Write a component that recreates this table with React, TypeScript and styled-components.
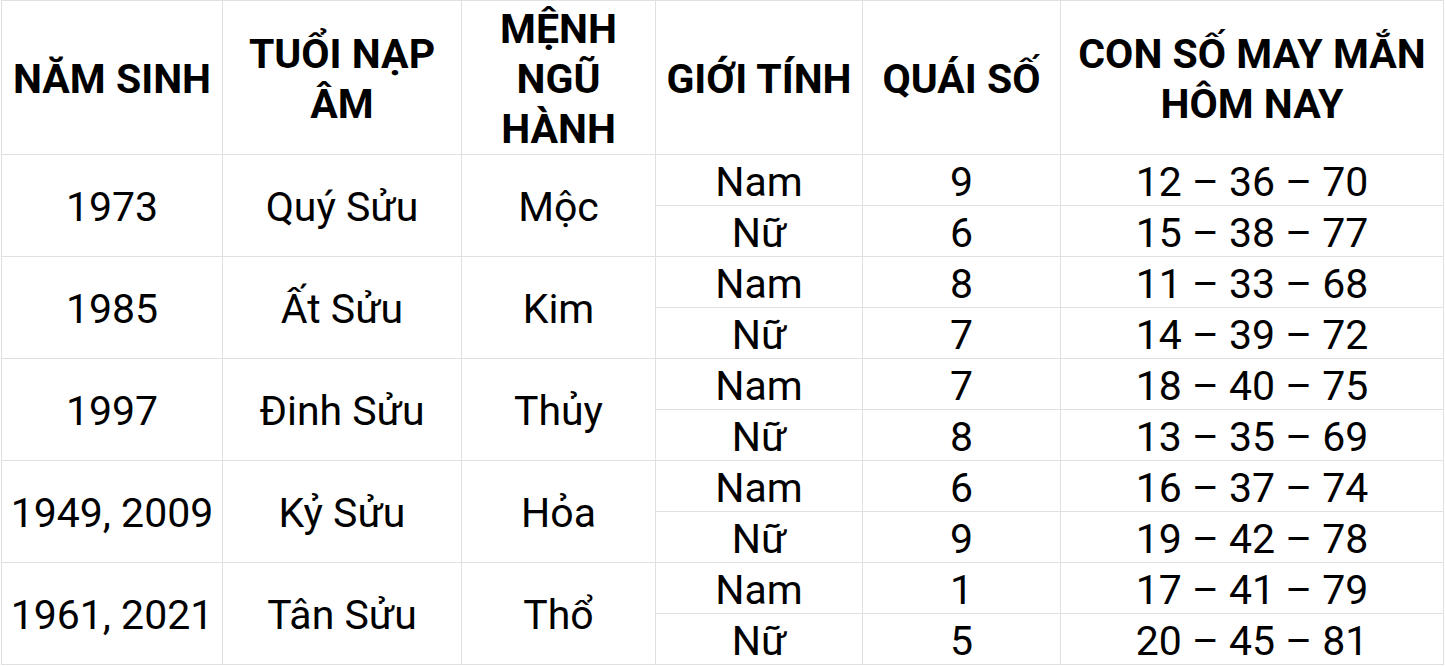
import styled, { createGlobalStyle } from 'styled-components'

const GlobalStyle = createGlobalStyle`
  html, body {
    margin: 0;
    padding: 0;
    background: #ffffff;
  }
  body {
    font-family: Roboto, "Noto Sans", "Liberation Sans", sans-serif;
    color: #000000;
  }
`

const Page = styled.div`
  padding-left: 1px;
`

const Table = styled.table`
  border-collapse: collapse;
  table-layout: fixed;
  width: 1442px;
  border-left: 1px solid #a8a8a8;
`

const Col = styled.col<{ $w: number }>`
  width: ${(p) => p.$w}px;
`

const HeadCell = styled.th`
  height: 151px;
  padding: 2px 6px 0;
  border: 1px solid #e0e0e0;
  font-size: 41px;
  line-height: 50px;
  font-weight: 700;
  text-align: center;
  vertical-align: middle;
`

const Cell = styled.td`
  height: 47px;
  padding: 3px 4px 0;
  border: 1px solid #e0e0e0;
  font-size: 41px;
  line-height: 46px;
  font-weight: 400;
  text-align: center;
  vertical-align: middle;
  white-space: nowrap;
`

type Row = {
  year: string
  tuoi: string
  menh: string
  nam: [string, string]
  nu: [string, string]
}

const rows: Row[] = [
  { year: '1973', tuoi: 'Quý Sửu', menh: 'Mộc', nam: ['9', '12 – 36 – 70'], nu: ['6', '15 – 38 – 77'] },
  { year: '1985', tuoi: 'Ất Sửu', menh: 'Kim', nam: ['8', '11 – 33 – 68'], nu: ['7', '14 – 39 – 72'] },
  { year: '1997', tuoi: 'Đinh Sửu', menh: 'Thủy', nam: ['7', '18 – 40 – 75'], nu: ['8', '13 – 35 – 69'] },
  { year: '1949, 2009', tuoi: 'Kỷ Sửu', menh: 'Hỏa', nam: ['6', '16 – 37 – 74'], nu: ['9', '19 – 42 – 78'] },
  { year: '1961, 2021', tuoi: 'Tân Sửu', menh: 'Thổ', nam: ['1', '17 – 41 – 79'], nu: ['5', '20 – 45 – 81'] },
]

const widths = [221, 239, 194, 207, 198, 383]

export default function App() {
  return (
    <Page>
      <GlobalStyle />
      <Table>
        <colgroup>
          {widths.map((w, i) => (
            <Col key={i} $w={w} />
          ))}
        </colgroup>
        <thead>
          <tr>
            <HeadCell>NĂM SINH</HeadCell>
            <HeadCell>TUỔI NẠP ÂM</HeadCell>
            <HeadCell>MỆNH NGŨ HÀNH</HeadCell>
            <HeadCell>GIỚI TÍNH</HeadCell>
            <HeadCell>QUÁI SỐ</HeadCell>
            <HeadCell>CON SỐ MAY MẮN HÔM NAY</HeadCell>
          </tr>
        </thead>
        <tbody>
          {rows.map((r) => [
            <tr key={r.year + '-nam'}>
              <Cell rowSpan={2}>{r.year}</Cell>
              <Cell rowSpan={2}>{r.tuoi}</Cell>
              <Cell rowSpan={2}>{r.menh}</Cell>
              <Cell>Nam</Cell>
              <Cell>{r.nam[0]}</Cell>
              <Cell>{r.nam[1]}</Cell>
            </tr>,
            <tr key={r.year + '-nu'}>
              <Cell>Nữ</Cell>
              <Cell>{r.nu[0]}</Cell>
              <Cell>{r.nu[1]}</Cell>
            </tr>,
          ])}
        </tbody>
      </Table>
    </Page>
  )
}
